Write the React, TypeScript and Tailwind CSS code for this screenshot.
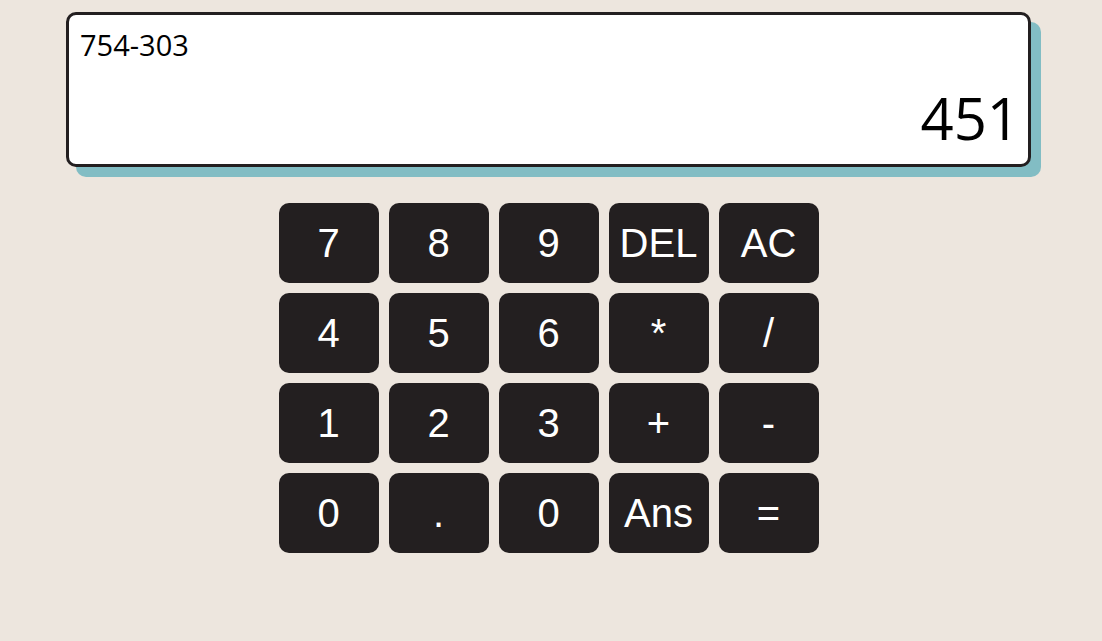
import React from "react";

const keys = ["7", "8", "9", "DEL", "AC", "4", "5", "6", "*", "/", "1", "2", "3", "+", "-", "0", ".", "0", "Ans", "="];

export default function App() {
  return (
    <div className="min-h-[641px] w-full bg-[#ede6de] pt-[12px]">
      <div className="ml-[66px] w-[965px]">
        <div className="flex h-[155px] flex-col justify-between rounded-[10px] border-[3px] border-[#231f20] bg-white pl-[11px] pr-[8px] pt-[10px] pb-[7px] shadow-[10px_10px_0_0_#82bdc4] [font-family:'Open_Sans',sans-serif]">
          <div className="text-[29px] leading-[40px] text-black">754-303</div>
          <div className="text-right text-[58px] leading-[79px] text-black">451</div>
        </div>
        <div className="mx-auto mt-[36px] grid w-[540px] grid-cols-5 gap-[10px]">
          {keys.map((k, i) => (
            <button
              key={i}
              className="flex h-[80px] w-[100px] items-center justify-center rounded-[10px] bg-[#231f20] text-[40px] text-white [font-family:'Liberation_Sans',Arial,sans-serif]"
            >
              {k}
            </button>
          ))}
        </div>
      </div>
    </div>
  );
}
